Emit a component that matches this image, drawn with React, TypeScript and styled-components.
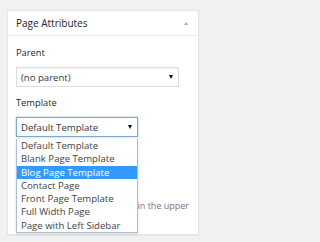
import React from 'react';
import styled, { createGlobalStyle } from 'styled-components';

const GlobalStyle = createGlobalStyle`
  html, body {
    margin: 0;
    padding: 0;
    background: #f1f1f1;
  }
  body {
    font-family: 'Open Sans', 'Noto Sans', sans-serif;
    color: #444;
  }
`;

const Page = styled.div`
  padding: 10px 10px 8px 7px;
  width: 209px;
  height: 242px;
  box-sizing: border-box;
`;

const Panel = styled.div`
  position: relative;
  width: 192px;
  height: 225px;
  box-sizing: border-box;
  background: #fff;
  border: 1px solid #e5e5e5;
  box-shadow: 0 1px 1px rgba(0, 0, 0, 0.04);
`;

const Header = styled.div`
  display: flex;
  align-items: center;
  justify-content: space-between;
  height: 24px;
  padding: 0 10px 0 8px;
  border-bottom: 1px solid #eee;
  font-size: 10px;
  color: #23282d;
`;

const Toggle = styled.span`
  width: 0;
  height: 0;
  border-left: 2.5px solid transparent;
  border-right: 2.5px solid transparent;
  border-bottom: 3px solid #a0a5aa;
`;

const Body = styled.div`
  position: relative;
  padding: 10px 8px 0 8px;
`;

const Label = styled.p`
  margin: 0 0 8px 0;
  font-size: 9.3px;
  line-height: 13px;
  color: #23282d;
`;

const Select = styled.div<{ $width: number; $focus?: boolean }>`
  display: flex;
  align-items: center;
  justify-content: space-between;
  box-sizing: border-box;
  width: ${(p) => p.$width}px;
  height: 20px;
  padding: 0 5px 0 4px;
  margin-bottom: ${(p) => (p.$focus ? 0 : 9)}px;
  border: 1px solid ${(p) => (p.$focus ? '#7eaad6' : '#ddd')};
  box-shadow: ${(p) => (p.$focus ? '0 0 2px rgba(30, 140, 190, 0.5)' : 'inset 0 1px 2px rgba(0, 0, 0, 0.07)')};
  background: #fff;
  font-size: 9.6px;
  color: #32373c;
`;

const Caret = styled.span`
  width: 0;
  height: 0;
  border-left: 2.5px solid transparent;
  border-right: 2.5px solid transparent;
  border-top: 4px solid #111;
`;

const Help = styled.p`
  margin: 62px 0 0 0;
  font-size: 9px;
  line-height: 13px;
  color: #72777c;
`;

const List = styled.ul`
  position: absolute;
  z-index: 2;
  left: 8px;
  top: 103px;
  width: 122px;
  margin: 0;
  padding: 0;
  list-style: none;
  box-sizing: border-box;
  background: #fff;
  border: 1px solid #a9bfd6;
  border-top: none;
  box-shadow: 0 1px 2px rgba(0, 0, 0, 0.15);
`;

const Option = styled.li<{ $active?: boolean }>`
  height: 13.3px;
  line-height: 13.3px;
  padding-left: 4px;
  font-size: 9.6px;
  white-space: nowrap;
  color: ${(p) => (p.$active ? '#fff' : '#444')};
  background: ${(p) => (p.$active ? '#3399ff' : 'transparent')};
`;

const templates = [
  'Default Template',
  'Blank Page Template',
  'Blog Page Template',
  'Contact Page',
  'Front Page Template',
  'Full Width Page',
  'Page with Left Sidebar',
];

export default function App() {
  return (
    <>
      <GlobalStyle />
      <Page>
        <Panel>
          <Header>
            <span>Page Attributes</span>
            <Toggle />
          </Header>
          <Body>
            <Label>Parent</Label>
            <Select $width={163}>
              <span>(no parent)</span>
              <Caret />
            </Select>
            <Label>Template</Label>
            <Select $width={122} $focus>
              <span>Default Template</span>
              <Caret />
            </Select>
            <Help>Need help? Use the Help tab in the upper right of your screen.</Help>
            <List>
              {templates.map((t) => (
                <Option key={t} $active={t === 'Blog Page Template'}>
                  {t}
                </Option>
              ))}
            </List>
          </Body>
        </Panel>
      </Page>
    </>
  );
}
